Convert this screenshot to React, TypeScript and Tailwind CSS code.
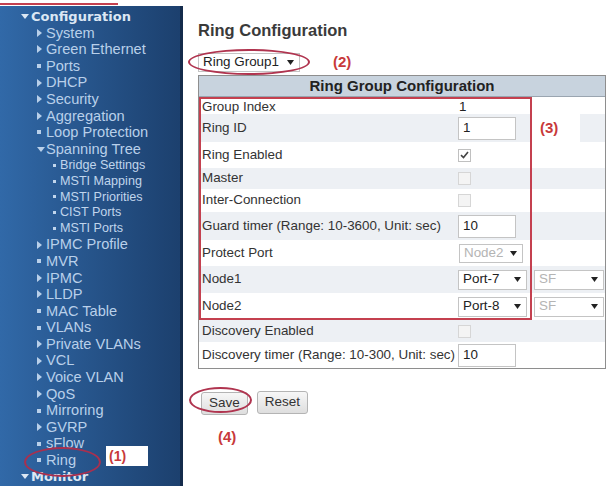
import React from "react";

type NavKind = "arrow" | "dot" | "open";

interface NavItem {
    label: string;
    kind: NavKind;
    level: 1 | 2 | 3;
}

const NAV: NavItem[] = [
    { label: "Configuration", kind: "open", level: 1 },
    { label: "System", kind: "arrow", level: 2 },
    { label: "Green Ethernet", kind: "arrow", level: 2 },
    { label: "Ports", kind: "dot", level: 2 },
    { label: "DHCP", kind: "arrow", level: 2 },
    { label: "Security", kind: "arrow", level: 2 },
    { label: "Aggregation", kind: "arrow", level: 2 },
    { label: "Loop Protection", kind: "dot", level: 2 },
    { label: "Spanning Tree", kind: "open", level: 2 },
    { label: "Bridge Settings", kind: "dot", level: 3 },
    { label: "MSTI Mapping", kind: "dot", level: 3 },
    { label: "MSTI Priorities", kind: "dot", level: 3 },
    { label: "CIST Ports", kind: "dot", level: 3 },
    { label: "MSTI Ports", kind: "dot", level: 3 },
    { label: "IPMC Profile", kind: "arrow", level: 2 },
    { label: "MVR", kind: "dot", level: 2 },
    { label: "IPMC", kind: "arrow", level: 2 },
    { label: "LLDP", kind: "arrow", level: 2 },
    { label: "MAC Table", kind: "dot", level: 2 },
    { label: "VLANs", kind: "dot", level: 2 },
    { label: "Private VLANs", kind: "arrow", level: 2 },
    { label: "VCL", kind: "arrow", level: 2 },
    { label: "Voice VLAN", kind: "arrow", level: 2 },
    { label: "QoS", kind: "arrow", level: 2 },
    { label: "Mirroring", kind: "dot", level: 2 },
    { label: "GVRP", kind: "arrow", level: 2 },
    { label: "sFlow", kind: "dot", level: 2 },
    { label: "Ring", kind: "dot", level: 2 },
    { label: "Monitor", kind: "open", level: 1 },
];

const Marker: React.FC<{ kind: NavKind; small?: boolean }> = ({ kind, small }) => {
    if (kind === "arrow") {
        return (
            <svg width="5" height="8" viewBox="0 0 5 8" className="fill-current">
                <polygon points="0,0 5,4 0,8" />
            </svg>
        );
    }
    if (kind === "open") {
        return (
            <svg width="8" height="5" viewBox="0 0 8 5" className="fill-current">
                <polygon points="0,0 8,0 4,5" />
            </svg>
        );
    }
    return <span className={small ? "block w-[3px] h-[3px] bg-current" : "block w-[4px] h-[4px] bg-current"} />;
};

const NavRow: React.FC<{ item: NavItem }> = ({ item }) => {
    if (item.level === 1) {
        return (
            <div className="flex items-center h-[16.6px] pl-[21px] text-[#dce7f4]">
                <span className="w-[10px] flex items-center"><Marker kind={item.kind} /></span>
                <span className="font-['DejaVu_Sans',sans-serif] font-bold text-[13px] leading-none">{item.label}</span>
            </div>
        );
    }
    if (item.level === 3) {
        return (
            <div className="flex items-center h-[15.8px] pl-[53px] text-[#c0d5ec]">
                <span className="w-[7px] flex items-center"><Marker kind={item.kind} small /></span>
                <span className="text-[12.6px] leading-none">{item.label}</span>
            </div>
        );
    }
    return (
        <div className="flex items-center h-[16.6px] pl-[37px] text-[#b9d0ea]">
            <span className="w-[9px] flex items-center"><Marker kind={item.kind} /></span>
            <span className="text-[14.6px] leading-none">{item.label}</span>
        </div>
    );
};

const Sidebar: React.FC = () => (
    <div className="w-[183px] shrink-0 flex flex-col">
        <div className="h-[6px] pt-[3px]">
            <div className="h-[2px] w-[118px] bg-[#c4404f]" />
        </div>
        <nav className="relative h-[480px] pt-[2px] bg-gradient-to-r from-[#3169a8] to-[#1c406e] border-r-[3px] border-[#142b4b]">
            {NAV.map((item) => (
                <NavRow key={item.label} item={item} />
            ))}
            {/* annotation (1) next to the Ring entry */}
            <div className="absolute left-[106px] top-[440px] w-[42px] h-[20px] bg-white flex items-center pl-[3px] text-[#c8393a] font-bold text-[14px]">
                (1)
            </div>
            <div className="absolute left-[24px] top-[441px] w-[77px] h-[30px] rounded-[50%] border-2 border-[#a8304f]" />
        </nav>
    </div>
);

const TextBox: React.FC<{ value: string }> = ({ value }) => (
    <div className="w-[58px] h-[23px] border border-[#c4c4c4] bg-white flex items-center pl-[4px] text-[13.4px] text-[#222]">
        {value}
    </div>
);

const Select: React.FC<{ value: string; w: string; disabled?: boolean; h?: string }> = ({ value, w, disabled, h }) => (
    <div className={`${w} ${h ?? "h-[20px]"} border border-[#c4c4c4] bg-white flex items-center justify-between pl-[4px] pr-[5px] text-[13.4px] ${disabled ? "text-[#b4b4b4]" : "text-[#222]"}`}>
        <span>{value}</span>
        <svg width="7" height="5" viewBox="0 0 7 5" className="fill-[#222]">
            <polygon points="0,0 7,0 3.5,5" />
        </svg>
    </div>
);

const Check: React.FC<{ checked?: boolean }> = ({ checked }) => (
    <span className={`w-[13px] h-[13px] border flex items-center justify-center ${checked ? "border-[#c0c0c0] bg-white" : "border-[#d6d6d6] bg-[#f4f4f4]"}`}>
        {checked && (
            <svg width="9" height="8" viewBox="0 0 9 8">
                <path d="M1 4.2 L3.5 6.6 L8 1" stroke="#444" strokeWidth="1.6" fill="none" />
            </svg>
        )}
    </span>
);

const Row: React.FC<{ label: string; h: string; gray?: boolean; children?: React.ReactNode; extra?: React.ReactNode }> = ({ label, h, gray, children, extra }) => (
    <div className={`grid grid-cols-[257px_76px_1fr] ${h} ${gray ? "bg-[#edf0f4]" : "bg-white"}`}>
        <div className="flex items-center pl-[3px] text-[13.4px] text-[#333] whitespace-nowrap">{label}</div>
        <div className="flex items-center pl-[2px]">{children}</div>
        <div className="flex items-center">{extra}</div>
    </div>
);

const RingTable: React.FC = () => (
    <div className="w-[408px] border border-[#8e8e8e] mt-[3px]">
        <div className="h-[21px] bg-[#c8d3de] border-b border-[#9aa5b0] flex items-center justify-center font-bold text-[15px] text-[#222]">
            Ring Group Configuration
        </div>
        <div className="relative">
            <Row label="Group Index" h="h-[17px]">
                <span className="pl-[1px] text-[13.4px] text-[#222]">1</span>
            </Row>
            <Row
                label="Ring ID"
                h="h-[28px]"
                gray
                extra={
                    <div className="w-[48px] h-full bg-white flex items-center pl-[8px] text-[#c8393a] font-bold text-[15px]">(3)</div>
                }
            >
                <TextBox value="1" />
            </Row>
            <Row label="Ring Enabled" h="h-[26px]">
                <Check checked />
            </Row>
            <Row label="Master" h="h-[21px]" gray>
                <Check />
            </Row>
            <Row label="Inter-Connection" h="h-[23px]">
                <Check />
            </Row>
            <Row label="Guard timer (Range: 10-3600, Unit: sec)" h="h-[28px]" gray>
                <TextBox value="10" />
            </Row>
            <Row label="Protect Port" h="h-[26px]">
                <span className="pl-[1px]"><Select value="Node2" w="w-[64px]" h="h-[19px]" disabled /></span>
            </Row>
            <Row label="Node1" h="h-[27px]" gray extra={<span className="pl-[2px]"><Select value="SF" w="w-[70px]" disabled /></span>}>
                <Select value="Port-7" w="w-[69px]" />
            </Row>
            <Row label="Node2" h="h-[27px]" extra={<span className="pl-[2px]"><Select value="SF" w="w-[70px]" disabled /></span>}>
                <Select value="Port-8" w="w-[69px]" />
            </Row>
            {/* annotation box (3) */}
            <div className="absolute left-0 top-0 bottom-0 w-[333px] border-2 border-[#c4404f] pointer-events-none" />
        </div>
        <Row label="Discovery Enabled" h="h-[22px]" gray>
            <Check />
        </Row>
        <Row label="Discovery timer (Range: 10-300, Unit: sec)" h="h-[26px]">
            <TextBox value="10" />
        </Row>
    </div>
);

const Button: React.FC<{ label: string }> = ({ label }) => (
    <button className="h-[23px] px-[7px] border border-[#b4b4b4] rounded-[3px] bg-gradient-to-b from-[#f7f7f7] to-[#dedede] text-[13.5px] text-[#333]">
        {label}
    </button>
);

export default function App() {
    return (
        <div className="flex w-[609px] h-[490px] bg-white font-['Liberation_Sans',Arial,sans-serif] overflow-hidden">
            <Sidebar />
            <main className="flex-1 flex flex-col pl-[15px] pt-[20px]">
                <h1 className="h-[20px] leading-[20px] font-bold text-[16.5px] text-[#3a3a3a]">Ring Configuration</h1>
                <div className="flex items-center mt-[13px] h-[19px]">
                    <div className="relative">
                        <Select value="Ring Group1" w="w-[102px]" h="h-[19px]" />
                        <div className="absolute -left-[10px] -top-[4px] w-[122px] h-[26px] rounded-[50%] border-2 border-[#b0344f]" />
                    </div>
                    <span className="ml-[33px] text-[#c8393a] font-bold text-[15px]">(2)</span>
                </div>
                <RingTable />
                <div className="flex items-center gap-[9px] mt-[21px] ml-[3px]">
                    <div className="relative">
                        <Button label="Save" />
                        <div className="absolute -left-[12px] -top-[3px] w-[63px] h-[26px] rounded-[50%] border-2 border-[#b0344f]" />
                    </div>
                    <Button label="Reset" />
                </div>
                <span className="mt-[11px] ml-[20px] text-[#c8393a] font-bold text-[15px]">(4)</span>
            </main>
        </div>
    );
}
